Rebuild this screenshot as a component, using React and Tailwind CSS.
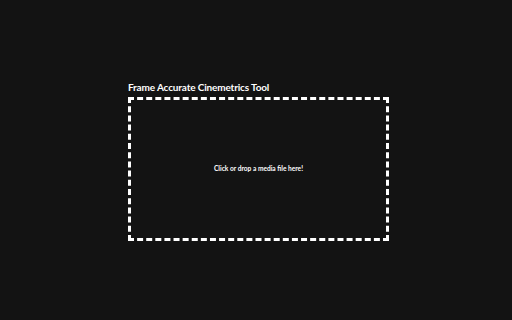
export default function App(){
  return (
    <div className="w-[512px] h-[320px] bg-[#131313] flex items-center justify-center" style={{fontFamily:'Lato, "Open Sans", sans-serif'}}>
      <div className="flex flex-col mt-[1px] ml-[5px]">
        <div className="text-white font-bold text-[10px] leading-[14px] mb-[3px] tracking-[-0.15px]">Frame Accurate Cinemetrics Tool</div>
        <div className="w-[261px] h-[144px] border-[3px] border-dashed border-white flex items-center justify-center cursor-pointer">
          <span className="text-white font-bold text-[6.6px]">Click or drop a media file here!</span>
        </div>
      </div>
    </div>
  );
}
